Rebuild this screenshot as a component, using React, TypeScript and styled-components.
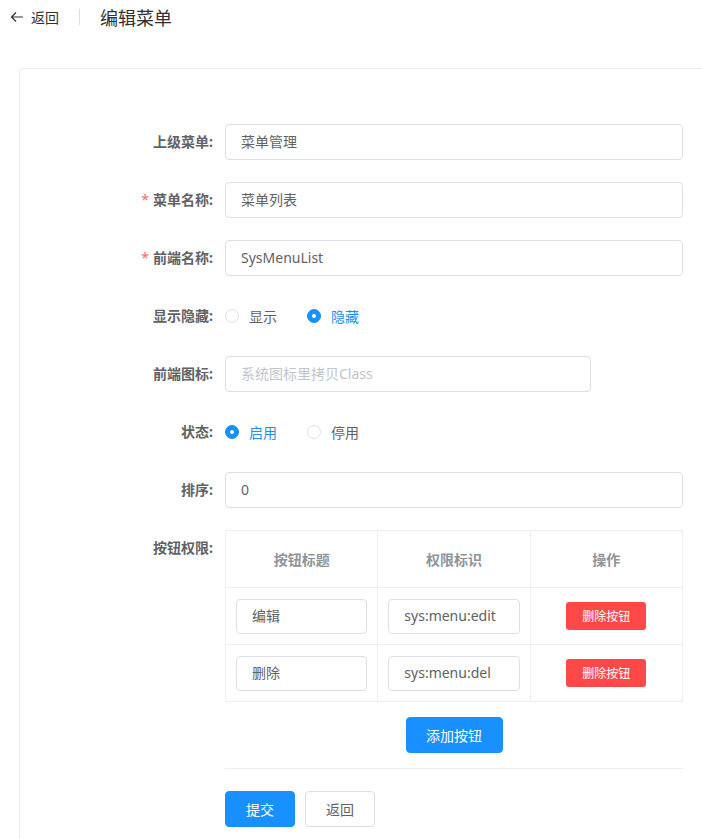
import styled, { createGlobalStyle } from "styled-components";

const GlobalStyle = createGlobalStyle`
  html, body {
    margin: 0;
    padding: 0;
    background: #fff;
    overflow-x: hidden;
  }
  body {
    font-family: "Noto Sans", "Noto Sans CJK SC", sans-serif;
    color: #606266;
    font-size: 14px;
  }
  * { box-sizing: border-box; }
`;

const Page = styled.div`
  padding: 5px 0 0 0;
  width: 702px;
  overflow: hidden;
`;

const PageHeader = styled.div`
  display: flex;
  align-items: center;
  height: 24px;
  padding-left: 10px;
`;

const Back = styled.div`
  display: flex;
  align-items: center;
  gap: 7px;
  font-size: 14px;
  color: #303133;
  cursor: pointer;
  svg { display: block; }
`;

const Divider = styled.span`
  width: 1px;
  height: 16px;
  background: #dcdfe6;
  margin: 0 20px;
`;

const Title = styled.div`
  font-size: 18px;
  color: #303133;
`;

const Card = styled.div`
  margin: 39px 0 0 19px;
  width: 683px;
  min-height: 800px;
  border: 1px solid #ebeef5;
  border-right: none;
  border-radius: 4px 0 0 4px;
  padding: 55px 0 0 0;
`;

const Form = styled.div`
  display: flex;
  flex-direction: column;
  gap: 22px;
  width: 663px;
`;

const Row = styled.div`
  display: flex;
  align-items: flex-start;
`;

const Label = styled.div<{ $required?: boolean }>`
  width: 205px;
  flex: none;
  text-align: right;
  padding-right: 12px;
  line-height: 35px;
  font-weight: 700;
  font-size: 14px;
  color: #606266;
  &::before {
    content: ${(p) => (p.$required ? '"*"' : "none")};
    color: #f56c6c;
    margin-right: 4px;
    font-weight: 400;
  }
`;

const Control = styled.div`
  flex: 1;
  min-height: 36px;
  display: flex;
  align-items: center;
`;

const Input = styled.input<{ $width?: number }>`
  width: ${(p) => (p.$width ? `${p.$width}px` : "100%")};
  height: 36px;
  border: 1px solid #dcdfe6;
  border-radius: 4px;
  padding: 0 15px 2px;
  font-family: inherit;
  font-size: 14px;
  color: #606266;
  outline: none;
  background: #fff;
  &::placeholder { color: #c0c4cc; }
`;

const RadioGroup = styled.div`
  display: flex;
  align-items: center;
  gap: 30px;
`;

const Radio = styled.label<{ $checked?: boolean }>`
  display: flex;
  align-items: center;
  gap: 10px;
  font-size: 14px;
  color: ${(p) => (p.$checked ? "#1890ff" : "#606266")};
  cursor: pointer;
`;

const RadioDot = styled.span<{ $checked?: boolean }>`
  width: 14px;
  height: 14px;
  border-radius: 50%;
  border: 1px solid ${(p) => (p.$checked ? "#1890ff" : "#dcdfe6")};
  background: ${(p) => (p.$checked ? "#1890ff" : "#fff")};
  display: flex;
  align-items: center;
  justify-content: center;
  &::after {
    content: "";
    width: 4px;
    height: 4px;
    border-radius: 50%;
    background: #fff;
    display: ${(p) => (p.$checked ? "block" : "none")};
  }
`;

const TableWrap = styled.div`
  width: 100%;
  display: flex;
  flex-direction: column;
`;

const Table = styled.table`
  width: 100%;
  border-collapse: collapse;
  table-layout: fixed;
  border: 1px solid #ebeef5;
`;

const Th = styled.th`
  height: 57px;
  border: 1px solid #ebeef5;
  font-weight: 700;
  color: #909399;
  font-size: 14px;
  text-align: center;
  padding-bottom: 2px;
`;

const Td = styled.td`
  height: 57px;
  border: 1px solid #ebeef5;
  padding: 0 10px;
  text-align: center;
`;

const CellInput = styled(Input)`
  height: 35px;
`;

const DangerButton = styled.button`
  width: 80px;
  height: 28px;
  border: none;
  border-radius: 3px;
  background: #ff4949;
  color: #fff;
  font-family: inherit;
  font-size: 12px;
  cursor: pointer;
`;

const AddArea = styled.div`
  display: flex;
  justify-content: center;
  padding: 15px 0 15px;
  border-bottom: 1px solid #ebeef5;
`;

const Button = styled.button<{ $primary?: boolean; $width?: number }>`
  width: ${(p) => p.$width ?? 70}px;
  height: 36px;
  border-radius: 4px;
  border: 1px solid ${(p) => (p.$primary ? "#1890ff" : "#dcdfe6")};
  background: ${(p) => (p.$primary ? "#1890ff" : "#fff")};
  color: ${(p) => (p.$primary ? "#fff" : "#606266")};
  font-family: inherit;
  font-size: 14px;
  cursor: pointer;
  padding: 0;
`;

const Actions = styled.div`
  display: flex;
  gap: 10px;
  margin-top: 22px;
`;

const buttons = [
  { title: "编辑", perm: "sys:menu:edit" },
  { title: "删除", perm: "sys:menu:del" },
];

export default function App() {
  return (
    <>
      <GlobalStyle />
      <Page>
        <PageHeader>
          <Back>
            <svg width="14" height="14" viewBox="0 0 14 14" fill="none" stroke="#303133" strokeWidth="1.2">
              <path d="M13 7H1.5M6 2.5L1.5 7L6 11.5" />
            </svg>
            返回
          </Back>
          <Divider />
          <Title>编辑菜单</Title>
        </PageHeader>
        <Card>
          <Form>
            <Row>
              <Label>上级菜单:</Label>
              <Control><Input defaultValue="菜单管理" /></Control>
            </Row>
            <Row>
              <Label $required>菜单名称:</Label>
              <Control><Input defaultValue="菜单列表" /></Control>
            </Row>
            <Row>
              <Label $required>前端名称:</Label>
              <Control><Input defaultValue="SysMenuList" /></Control>
            </Row>
            <Row>
              <Label>显示隐藏:</Label>
              <Control>
                <RadioGroup>
                  <Radio><RadioDot />显示</Radio>
                  <Radio $checked><RadioDot $checked />隐藏</Radio>
                </RadioGroup>
              </Control>
            </Row>
            <Row>
              <Label>前端图标:</Label>
              <Control><Input $width={366} placeholder="系统图标里拷贝Class" /></Control>
            </Row>
            <Row>
              <Label>状态:</Label>
              <Control>
                <RadioGroup>
                  <Radio $checked><RadioDot $checked />启用</Radio>
                  <Radio><RadioDot />停用</Radio>
                </RadioGroup>
              </Control>
            </Row>
            <Row>
              <Label>排序:</Label>
              <Control><Input defaultValue="0" /></Control>
            </Row>
            <Row>
              <Label>按钮权限:</Label>
              <Control>
                <TableWrap>
                  <Table>
                    <thead>
                      <tr>
                        <Th>按钮标题</Th>
                        <Th>权限标识</Th>
                        <Th>操作</Th>
                      </tr>
                    </thead>
                    <tbody>
                      {buttons.map((b) => (
                        <tr key={b.perm}>
                          <Td><CellInput defaultValue={b.title} /></Td>
                          <Td><CellInput defaultValue={b.perm} /></Td>
                          <Td><DangerButton>删除按钮</DangerButton></Td>
                        </tr>
                      ))}
                    </tbody>
                  </Table>
                  <AddArea>
                    <Button $primary $width={97}>添加按钮</Button>
                  </AddArea>
                  <Actions>
                    <Button $primary>提交</Button>
                    <Button>返回</Button>
                  </Actions>
                </TableWrap>
              </Control>
            </Row>
          </Form>
        </Card>
      </Page>
    </>
  );
}
